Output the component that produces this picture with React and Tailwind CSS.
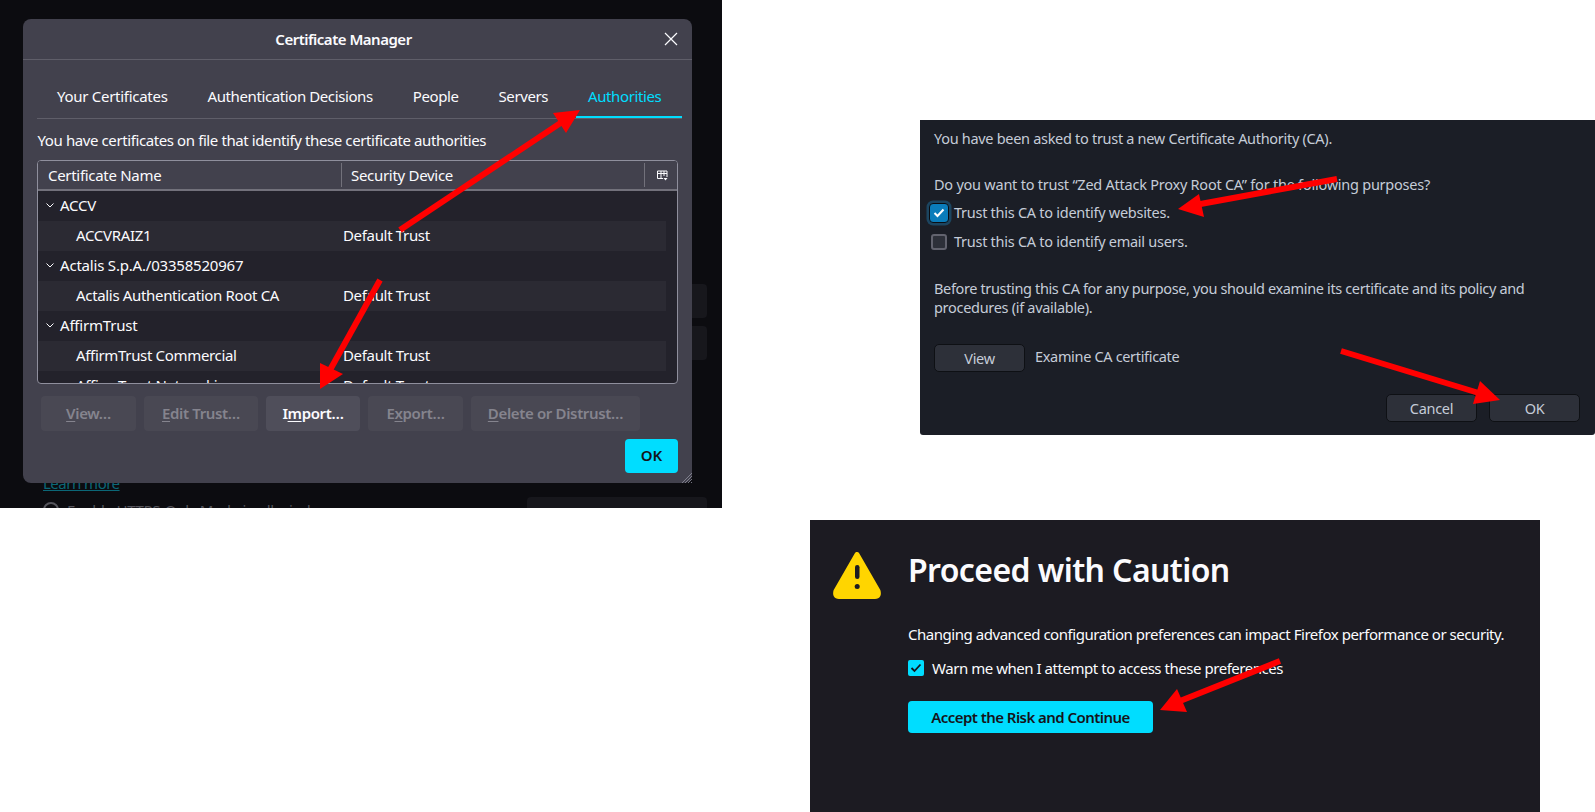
import React from "react";

const sans = "font-['Noto_Sans','Open_Sans',sans-serif]";

function Chevron() {
  return (
    <svg width="10" height="10" viewBox="0 0 10 10" className="shrink-0">
      <path d="M1.5 3.5 L5 7 L8.5 3.5" fill="none" stroke="#fbfbfe" strokeWidth="1" />
    </svg>
  );
}

function GroupRow({ label }) {
  return (
    <div className="h-[30px] flex items-center pl-[7px] pb-[2px] gap-[5px] text-[#fbfbfe] tracking-[-0.2px]">
      <Chevron />
      <span>{label}</span>
    </div>
  );
}

function LeafRow({ label }) {
  return (
    <div className="h-[30px] w-[628px] flex items-center pb-[2px] bg-[#2b2a33] text-[#fbfbfe] tracking-[-0.33px]">
      <span className="pl-[38px] w-[305px] shrink-0 whitespace-nowrap">{label}</span>
      <span className="whitespace-nowrap">Default Trust</span>
    </div>
  );
}

function ActionBtn({ w, active, pre, u, post }) {
  return (
    <div
      style={{ width: w }}
      className={
        "h-[35px] rounded-[4px] flex items-center justify-center font-semibold text-[15px] tracking-[-0.35px] " +
        (active ? "bg-[#4f4e5a] text-[#fbfbfe]" : "bg-[#494853] text-[#85848e]")
      }
    >
      {pre}
      <span className="underline underline-offset-2">{u}</span>
      {post}
    </div>
  );
}

function CertManager() {
  return (
    <div className="absolute left-0 top-0 w-[722px] h-[508px] bg-[#0c0c10] overflow-hidden">
      <div className="absolute left-[527px] top-[497px] w-[180px] h-[30px] rounded-[4px] bg-[#17171c]" />
      <div className="absolute left-[680px] top-[284px] w-[27px] h-[34px] rounded-[4px] bg-[#17171c]" />
      <div className="absolute left-[680px] top-[326px] w-[27px] h-[34px] rounded-[4px] bg-[#17171c]" />
      <div className="absolute left-[43px] top-[472px] text-[#0b6777] underline text-[15px] tracking-[-0.5px]">Learn more</div>
      <div className="absolute left-[43px] top-[499px] flex items-center gap-[8px] text-[#55555c] text-[15px] tracking-[-0.3px] whitespace-nowrap">
        <span className="w-[16px] h-[16px] rounded-full border-2 border-[#55555c]" />
        Enable HTTPS-Only Mode in all windows
      </div>

      <div className="absolute left-[23px] top-[19px] w-[669px] h-[464px] rounded-[8px] bg-[#42414d] flex flex-col text-[15px]">
        <div className="h-[41px] shrink-0 border-b border-[#5f5e69] flex items-center justify-center pr-[28px] relative font-semibold text-[#fbfbfe] tracking-[-0.5px]">
          Certificate Manager
          <svg width="14" height="14" viewBox="0 0 14 14" className="absolute right-[14px] top-[13px]">
            <path d="M1 1 L13 13 M13 1 L1 13" stroke="#fbfbfe" strokeWidth="1.2" />
          </svg>
        </div>
        <div className="ml-[14px] mr-[10px] h-[59px] shrink-0 border-b border-[#5f5e69] flex items-end text-[#fbfbfe] tracking-[-0.4px] relative">
          <div className="flex items-center h-[44px] pl-[20px] gap-[40px] w-full">
            <span className="tracking-[-0.28px]">Your Certificates</span>
            <span>Authentication Decisions</span>
            <span>People</span>
            <span>Servers</span>
            <span className="text-[#00ddff]">Authorities</span>
          </div>
          <div className="absolute right-0 bottom-0 w-[106px] h-[2px] bg-[#00ddff]" />
        </div>
        <div className="ml-[14.5px] mt-[11px] h-[21px] flex items-center text-[#fbfbfe] tracking-[-0.4px] whitespace-nowrap">
          You have certificates on file that identify these certificate authorities
        </div>
        <div className="mx-[14px] mt-[9px] w-[641px] h-[224px] shrink-0 rounded-[4px] border border-[#8f8f9d] bg-[#23222b] overflow-hidden">
          <div className="h-[30px] bg-[#42414d] border-b-2 border-[#72717b] flex items-center text-[#fbfbfe] tracking-[-0.3px] relative">
            <span className="pl-[10px] w-[304px] shrink-0 h-[24px] border-r border-[#72717b] flex items-center">Certificate Name</span>
            <span className="pl-[9px] w-[303px] shrink-0 h-[24px] border-r border-[#72717b] flex items-center">Security Device</span>
            <svg width="11" height="11" viewBox="0 0 11 11" className="ml-[12px]">
              <path d="M0.5 1 H10 V7 M0.5 1 V8.5 H6 M0.5 3.5 H10 M4 1 V8.5 M7 1 V6" fill="none" stroke="#fbfbfe" strokeWidth="1" />
              <path d="M6.5 8 H10.5 L8.5 10.5 Z" fill="#fbfbfe" />
            </svg>
          </div>
          <GroupRow label="ACCV" />
          <LeafRow label="ACCVRAIZ1" />
          <GroupRow label="Actalis S.p.A./03358520967" />
          <LeafRow label="Actalis Authentication Root CA" />
          <GroupRow label="AffirmTrust" />
          <LeafRow label="AffirmTrust Commercial" />
          <div className="h-[30px] flex items-center pb-[2px] text-[#fbfbfe] tracking-[-0.33px]">
            <span className="pl-[38px] w-[305px] shrink-0 whitespace-nowrap">AffirmTrust Networking</span>
            <span className="whitespace-nowrap">Default Trust</span>
          </div>
        </div>
        <div className="mt-[12px] ml-[18px] flex gap-[8px]">
          <ActionBtn w={95} u="V" post="iew…" />
          <ActionBtn w={114} u="E" post="dit Trust…" />
          <ActionBtn w={94} active pre="I" u="m" post="port…" />
          <ActionBtn w={95} pre="E" u="x" post="port…" />
          <ActionBtn w={169} u="D" post="elete or Distrust…" />
        </div>
        <div className="mt-[8px] mr-[14px] flex justify-end">
          <div className="w-[53px] h-[34px] pb-[2px] rounded-[4px] bg-[#00ddff] text-[#15141a] font-semibold flex items-center justify-center">OK</div>
        </div>
        <svg width="11" height="11" viewBox="0 0 11 11" className="absolute right-0 bottom-0">
          <path d="M1 11 L11 1 M4 11 L11 4 M7 11 L11 7 M10 11 L11 10" stroke="#8f8f9d" strokeWidth="0.8" />
        </svg>
      </div>
    </div>
  );
}

function GreyBtn({ label, w }) {
  return (
    <div style={{ width: w }} className="h-[28px] shrink-0 pt-[2px] rounded-[5px] bg-[#2d3039] border border-[#0e1014] flex items-center justify-center text-[#c5ccd8]">
      {label}
    </div>
  );
}

function TrustDialog() {
  return (
    <div className="absolute left-[920px] top-[120px] w-[675px] h-[315px] bg-[#1b1e26] rounded-bl-[3px] rounded-br-[3px] text-[14.5px] text-[#c5ccd8] tracking-[-0.3px] flex flex-col pl-[14px] pr-[15px]">
      <div className="h-[20px] mt-[9px] flex items-center whitespace-nowrap">You have been asked to trust a new Certificate Authority (CA).</div>
      <div className="h-[20px] mt-[26px] flex items-center whitespace-nowrap tracking-[-0.24px]">Do you want to trust “Zed Attack Proxy Root CA” for the following purposes?</div>
      <div className="h-[20px] mt-[8px] flex items-center gap-[5px] whitespace-nowrap relative">
        <div className="w-[20px] h-[20px] -ml-[5px] rounded-[4px] bg-[#0a7cba] border-[1.5px] border-[#0a0d12] ring-[2.5px] ring-[#1c4560] flex items-center justify-center shrink-0">
          <svg width="12" height="10" viewBox="0 0 12 10">
            <path d="M1.5 5 L4.5 8 L10.5 1.5" fill="none" stroke="#ffffff" strokeWidth="2" />
          </svg>
        </div>
        <span className="tracking-[-0.27px]">Trust this CA to identify websites.</span>
      </div>
      <div className="h-[20px] mt-[9px] flex items-center gap-[7px] whitespace-nowrap">
        <div className="w-[16px] h-[16px] -ml-[3px] rounded-[3px] bg-[#2d3039] border-2 border-[#62636e] shrink-0" />
        <span className="tracking-[-0.27px]">Trust this CA to identify email users.</span>
      </div>
      <div className="h-[20px] mt-[27px] flex items-center whitespace-nowrap tracking-[-0.36px]">Before trusting this CA for any purpose, you should examine its certificate and its policy and</div>
      <div className="h-[18px] flex items-center whitespace-nowrap">procedures (if available).</div>
      <div className="mt-[27px] flex items-center gap-[10px]">
        <GreyBtn label="View" w={91} />
        <span className="-mt-[2px] tracking-[-0.33px]">Examine CA certificate</span>
      </div>
      <div className="mt-[22px] flex justify-end gap-[12px]">
        <GreyBtn label="Cancel" w={91} />
        <GreyBtn label="OK" w={91} />
      </div>
    </div>
  );
}

function CautionPanel() {
  return (
    <div className="absolute left-[810px] top-[520px] w-[730px] h-[292px] bg-[#1c1b22] text-[#fbfbfe] flex pl-[22px]">
      <svg width="50" height="47" viewBox="0 0 50 47" className="mt-[32px] shrink-0">
        <path d="M25 2.5 L46 39 Q 47.5 44.5 43 44.5 L7 44.5 Q 2.5 44.5 4 39 Z" fill="#ffd500" stroke="#ffd500" strokeWidth="5" strokeLinejoin="round" />
        <rect x="23" y="13" width="4.5" height="14" rx="2.2" fill="#1c1b22" />
        <circle cx="25.2" cy="34.5" r="2.5" fill="#1c1b22" />
      </svg>
      <div className="ml-[26px] flex flex-col">
        <div className="mt-[27px] h-[46px] flex items-center text-[32px] font-semibold tracking-[-0.6px] whitespace-nowrap">Proceed with Caution</div>
        <div className="mt-[31px] h-[20px] flex items-center text-[15px] tracking-[-0.46px] whitespace-nowrap">Changing advanced configuration preferences can impact Firefox performance or security.</div>
        <div className="mt-[14px] h-[20px] flex items-center gap-[8px] text-[15px] tracking-[-0.46px] whitespace-nowrap">
          <div className="w-[16px] h-[16px] rounded-[2px] bg-[#00ddff] flex items-center justify-center">
            <svg width="12" height="10" viewBox="0 0 12 10">
              <path d="M1.5 5 L4.5 8 L10.5 1.5" fill="none" stroke="#15141a" strokeWidth="1.8" />
            </svg>
          </div>
          Warn me when I attempt to access these preferences
        </div>
        <div className="mt-[23px] w-[245px] h-[32px] rounded-[4px] bg-[#00ddff] text-[#15141a] font-semibold text-[15px] tracking-[-0.55px] flex items-center justify-center">
          Accept the Risk and Continue
        </div>
      </div>
    </div>
  );
}

function Arrows() {
  const red = "#ff0000";
  return (
    <svg width="1595" height="812" viewBox="0 0 1595 812" className="absolute left-0 top-0 pointer-events-none">
      <line x1="400" y1="230" x2="565" y2="120" stroke={red} strokeWidth="6" />
      <polygon points="580,110 553,113 566,133" fill={red} />
      <line x1="380" y1="280" x2="330" y2="370" stroke={red} strokeWidth="6" />
      <polygon points="320,389 320,363 343,374" fill={red} />
      <line x1="1337" y1="179" x2="1195" y2="205" stroke={red} strokeWidth="6" />
      <polygon points="1178,209 1199,194 1204,217" fill={red} />
      <line x1="1341" y1="351" x2="1482" y2="394" stroke={red} strokeWidth="6" />
      <polygon points="1500,400 1480,381 1473,404" fill={red} />
      <line x1="1280" y1="661" x2="1175" y2="703" stroke={red} strokeWidth="6" />
      <polygon points="1160,710 1177,689 1187,712" fill={red} />
    </svg>
  );
}

export default function App() {
  return (
    <div className={"relative w-[1595px] h-[812px] bg-white overflow-hidden " + sans}>
      <CertManager />
      <TrustDialog />
      <CautionPanel />
      <Arrows />
    </div>
  );
}
